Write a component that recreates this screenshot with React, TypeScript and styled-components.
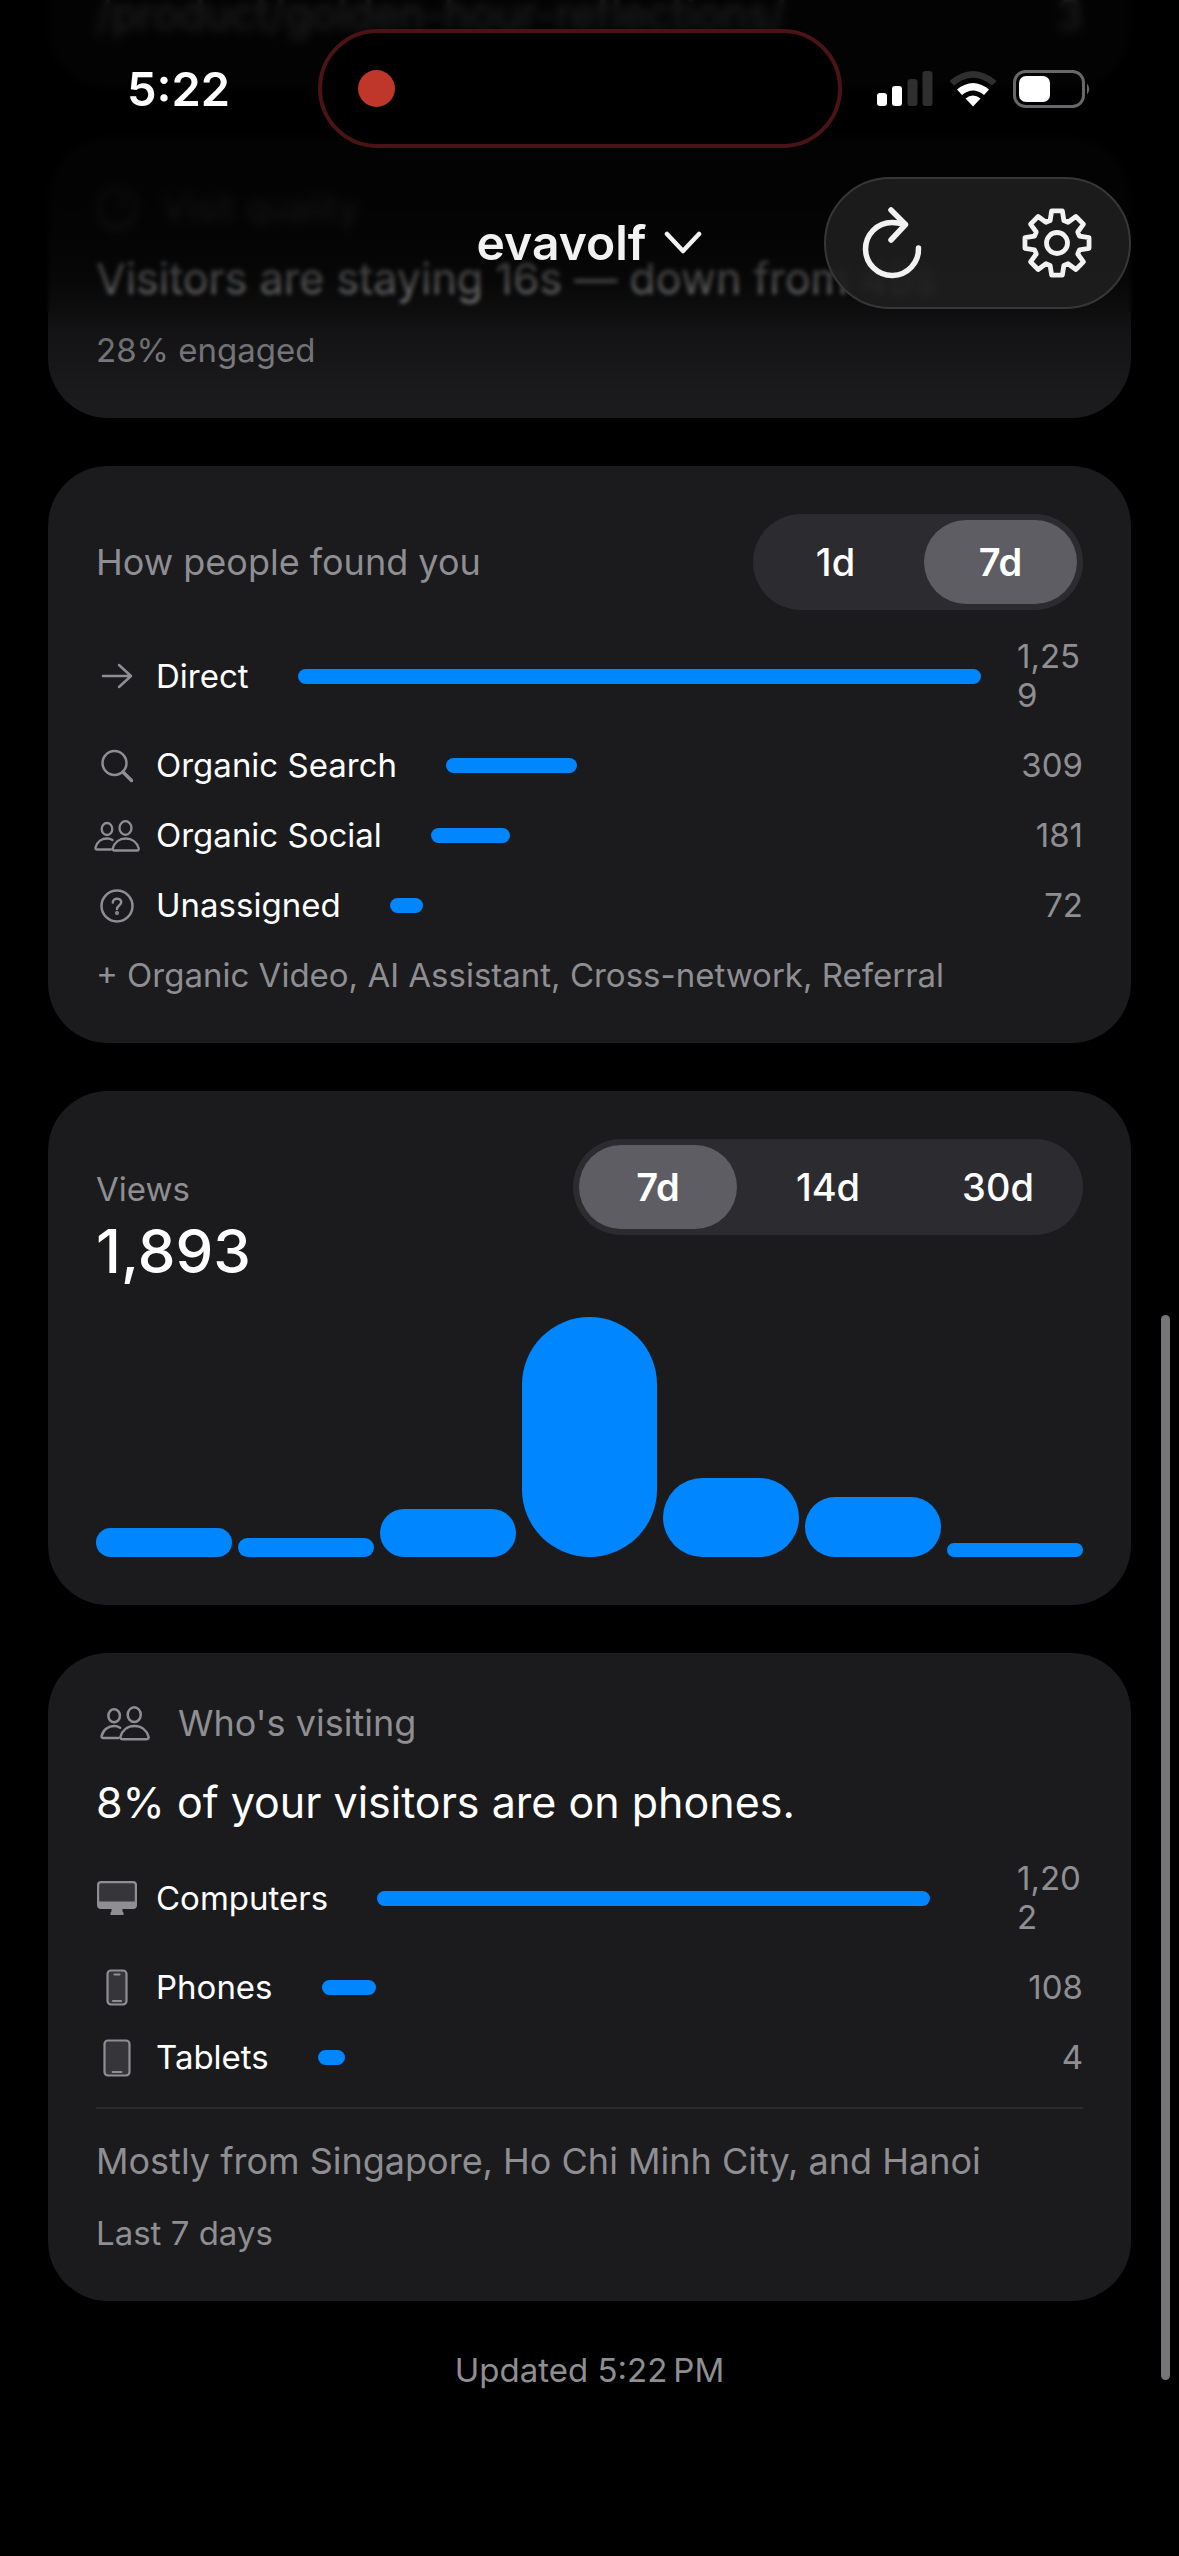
import React, { useState } from "react";
import styled, { createGlobalStyle } from "styled-components";

const GlobalStyle = createGlobalStyle`
  *, *::before, *::after { box-sizing: border-box; }
  html, body { margin: 0; background: #000; }
  body {
    font-family: Inter, "Liberation Sans", sans-serif;
    color: #fff;
    -webkit-font-smoothing: antialiased;
  }
  h1, h2, p, ul { margin: 0; padding: 0; font-weight: 400; }
  button { font: inherit; color: inherit; background: none; border: 0; padding: 0; }
`;

const Page = styled.div`
  position: relative;
  min-height: 100vh;
  overflow: hidden;
  background: #000;
`;

const Feed = styled.main`
  display: flex;
  flex-direction: column;
  gap: 48px;
  padding: 0 48px 96px;
`;

const Card = styled.section`
  display: flex;
  flex-direction: column;
  gap: ${(p: { $gap?: number }) => p.$gap ?? 30}px;
  padding: 48px;
  border-radius: 60px;
  background: #1b1b1d;
`;

const ClippedCard = styled(Card)`
  flex-direction: row;
  justify-content: space-between;
  height: 89px;
  padding: 0 48px 48px;
  align-items: flex-end;
  border-radius: 0 0 60px 60px;
  font-size: 43px;
  line-height: 53px;
`;

const CardLabel = styled.div`
  display: flex;
  align-items: center;
  gap: 24px;
  font-size: 36px;
  line-height: 45px;
  color: #8e8e93;
`;

const LabelIcon = styled.span`
  display: flex;
  justify-content: center;
  min-width: ${(p: { $width: number }) => p.$width}px;
`;

const Title = styled.h2`
  font-size: 36px;
  line-height: 45px;
  color: #8e8e93;
`;

const Headline = styled.p`
  font-size: 43px;
  line-height: 53px;
`;

const Summary = styled.div`
  display: flex;
  flex-direction: column;
  gap: 26px;
`;

const Breakdown = styled.div`
  display: flex;
  flex-direction: column;
  gap: 31px;
`;

const Note = styled.p`
  font-size: 36px;
  line-height: 45px;
  color: #8e8e93;
`;

const Caption = styled.p`
  font-size: 33px;
  line-height: 39px;
  color: #8e8e93;
`;

const Divider = styled.hr`
  width: 100%;
  height: 2px;
  margin: 0;
  border: 0;
  background: #2c2c2e;
`;

const CardHead = styled.header`
  display: flex;
  justify-content: space-between;
  align-items: ${(p: { $align: string }) => p.$align};
`;

const Total = styled.div`
  display: flex;
  flex-direction: column;
  gap: 6px;
`;

const TotalValue = styled.strong`
  font-size: 60px;
  line-height: 72px;
  font-weight: 500;
`;

const Segments = styled.div`
  display: grid;
  grid-auto-flow: column;
  grid-auto-columns: 1fr;
  gap: 12px;
  width: ${(p: { $width: number }) => p.$width}px;
  padding: 6px;
  border-radius: 48px;
  background: #2c2b30;
`;

const Segment = styled.button`
  height: 84px;
  border-radius: 42px;
  font-size: 38px;
  font-weight: ${(p: { $on: boolean }) => (p.$on ? 600 : 500)};
  background: ${(p: { $on: boolean }) => (p.$on ? "#5e5d63" : "transparent")};
`;

const Rows = styled.ul`
  display: flex;
  flex-direction: column;
  gap: 31px;
  list-style: none;
`;

const Row = styled.li`
  display: flex;
  align-items: center;
  font-size: 33px;
  line-height: 39px;
`;

const RowIcon = styled.span`
  display: flex;
  flex: none;
  justify-content: center;
  width: 42px;
  margin-right: 18px;
  color: #8e8e93;
  svg { flex: none; }
`;

const RowName = styled.span`
  flex: none;
  margin-right: 49px;
`;

const Track = styled.span`
  flex: 1;
  display: flex;
`;

const Fill = styled.span`
  height: 15px;
  min-width: 27px;
  border-radius: 8px;
  background: #0086ff;
`;

const RowValue = styled.span`
  flex: none;
  width: 66px;
  margin-left: 36px;
  color: #8e8e93;
  text-align: right;
  &[data-wrap="true"] { text-align: left; word-break: break-all; }
`;

const Chart = styled.div`
  display: flex;
  align-items: flex-end;
  gap: 6px;
  height: 240px;
`;

const Column = styled.span`
  flex: 1;
  border-radius: 68px;
  background: #0086ff;
`;

const Updated = styled.p`
  padding-top: 2px;
  text-align: center;
  font-size: 33px;
  line-height: 39px;
  color: #8e8e93;
`;

const Haze = styled.div`
  position: absolute;
  inset: 0 0 auto 0;
  height: 400px;
  background: linear-gradient(
    rgba(0, 0, 0, 0.87) 0, rgba(0, 0, 0, 0.87) 200px, rgba(0, 0, 0, 0.8) 250px,
    rgba(0, 0, 0, 0.72) 280px, rgba(0, 0, 0, 0.56) 300px, rgba(0, 0, 0, 0.25) 335px,
    rgba(0, 0, 0, 0) 400px
  );
`;

const Blur = styled.div`
  position: absolute;
  inset: 0 0 auto 0;
  height: ${(p: { $height: number }) => p.$height}px;
  backdrop-filter: blur(${(p: { $radius: number }) => p.$radius}px);
`;

const TopBar = styled.header`
  position: absolute;
  inset: 0 0 auto 0;
`;

const StatusBar = styled.div`
  display: grid;
  grid-template-columns: 318fr 524px 337fr;
  align-items: center;
  padding-top: 29px;
`;

const Clock = styled.time`
  padding-left: 127px;
  font-size: 47px;
  line-height: 58px;
  font-weight: 600;
`;

const Island = styled.div`
  display: flex;
  align-items: center;
  height: 119px;
  padding-left: 36px;
  border: 4px solid #4a1315;
  border-radius: 60px;
  background: #000;
`;

const RecordDot = styled.span`
  width: 37px;
  height: 37px;
  border-radius: 50%;
  background: #bf372a;
`;

const StatusIcons = styled.div`
  display: flex;
  align-items: center;
  justify-content: flex-end;
  gap: 16px;
  padding-right: 87px;
`;

const NavBar = styled.nav`
  display: grid;
  grid-template-columns: 1fr auto 1fr;
  align-items: center;
  padding: 29px 48px 0;
`;

const SiteButton = styled.button`
  grid-column: 2;
  display: flex;
  align-items: center;
  gap: 18px;
  font-size: 48px;
  line-height: 60px;
  font-weight: 600;
  color: #f2f2f2;
`;

const Actions = styled.div`
  justify-self: end;
  display: flex;
  align-items: center;
  justify-content: space-between;
  width: 307px;
  height: 132px;
  padding: 0 36px;
  border: 2px solid #373739;
  border-radius: 66px;
  background: rgba(31, 31, 31, 0.86);
  backdrop-filter: blur(3px);
`;

const IconButton = styled.button`
  display: flex;
  color: #f2f2f2;
`;

const ScrollThumb = styled.div`
  position: absolute;
  top: 1315px;
  right: 9px;
  width: 9px;
  height: 1065px;
  border-radius: 5px;
  background: #757577;
`;

type IconProps = { size?: number };

const stroke = {
  fill: "none",
  stroke: "currentColor",
  strokeLinecap: "round" as const,
  strokeLinejoin: "round" as const,
};

const ArrowIcon = () => (
  <svg width="32" height="28" viewBox="0 0 32 28" {...stroke} strokeWidth="2.5">
    <path d="M2 14H30M18 3L30 14L18 25" />
  </svg>
);

const SearchIcon = () => (
  <svg width="34" height="34" viewBox="0 0 34 34" {...stroke} strokeWidth="2.5">
    <circle cx="14.500" cy="14" r="12" />
    <path d="M23 23L31.500 31.500" strokeWidth="3.500" />
  </svg>
);

const PeopleIcon = ({ size = 46 }: IconProps) => (
  <svg width={size} height={(size * 32) / 46} viewBox="0 0 46 32" {...stroke} strokeWidth="2.3">
    <ellipse cx="13" cy="9" rx="5.300" ry="6" />
    <ellipse cx="31.500" cy="8" rx="6" ry="6.800" />
    <path d="M17 29.500H3Q1.200 29.500 1.500 27.500C3 21.500 8 18.500 13 18.500C15 18.500 17 19 18.500 20" />
    <path d="M20.500 30.500H43Q45 30.500 44.700 28.300C43 22.300 38 18.500 31.700 18.500C25.400 18.500 20.500 22.300 18.800 28.300Q18.500 30.500 20.500 30.500Z" />
  </svg>
);

const QuestionIcon = () => (
  <svg width="34" height="34" viewBox="0 0 34 34" {...stroke} strokeWidth="2.5">
    <circle cx="17" cy="17" r="15.500" />
    <path d="M12.800 13.500C12.800 8.500 21.200 8.500 21.200 13.300C21.200 16.500 17 16.500 17 20" />
    <circle cx="17" cy="24" r="0.800" />
  </svg>
);

const ComputerIcon = () => (
  <svg width="40" height="34" viewBox="0 0 40 34">
    <rect x="1" y="1" width="38" height="27" rx="3" fill="#36353a" />
    <path
      fill="#8e8e93"
      fillRule="evenodd"
      d="M4 0H36Q40 0 40 4V24Q40 28 36 28H25.500V30Q25.500 31 26.500 31.500V34H13.500V31.500Q14.500 31 14.500 30V28H4Q0 28 0 24V4Q0 0 4 0ZM4 2.200Q2.200 2.200 2.200 4V20.500H37.800V4Q37.800 2.200 36 2.200Z"
    />
  </svg>
);

const PhoneIcon = () => (
  <svg width="22" height="38" viewBox="0 0 22 38" {...stroke} strokeWidth="2.2">
    <rect x="1.500" y="1.500" width="19" height="34" rx="3.500" fill="#36353a" />
    <path d="M8.500 5.500H13.500M7 32H15" />
  </svg>
);

const TabletIcon = () => (
  <svg width="28" height="38" viewBox="0 0 28 38" {...stroke} strokeWidth="2.2">
    <rect x="1.500" y="1.500" width="25" height="35" rx="3.500" fill="#36353a" />
    <path d="M9.500 33H18.500" strokeWidth="1.800" />
  </svg>
);

const GaugeIcon = () => (
  <svg width="42" height="42" viewBox="0 0 42 42" {...stroke} strokeWidth="3">
    <circle cx="21" cy="21" r="19" />
    <path d="M21 22L28 12" />
  </svg>
);

const ChevronIcon = () => (
  <svg width="38" height="24" viewBox="0 0 38 24" {...stroke} strokeWidth="4.500">
    <path d="M3 3L19 20L35 3" />
  </svg>
);

const RefreshIcon = () => (
  <svg width="60" height="72" viewBox="0 0 60 72" {...stroke} strokeWidth="5.500">
    <path d="M43 17.500Q36 15.500 30 15.500A26.500 26.500 0 1 0 56.500 41" />
    <path d="M29 3L43.500 17.500L29 33" />
  </svg>
);

const GEAR_TEETH = 8;
const gearPath = (() => {
  const at = (radius: number, degrees: number) => {
    const a = (degrees * Math.PI) / 180;
    return `${(36 + radius * Math.sin(a)).toFixed(2)} ${(36 - radius * Math.cos(a)).toFixed(2)}`;
  };
  const points: string[] = [];
  for (let i = 0; i < GEAR_TEETH; i += 1) {
    const mid = i * (360 / GEAR_TEETH);
    points.push(at(23.5, mid - 17), at(32.5, mid - 9.5), at(32.5, mid + 9.5), at(23.5, mid + 17));
  }
  return `M${points.join("L")}Z`;
})();

const GearIcon = () => (
  <svg width="72" height="72" viewBox="0 0 72 72" {...stroke} strokeWidth="4.800">
    <path d={gearPath} />
    <circle cx="36" cy="36" r="10.500" />
  </svg>
);

const SignalIcon = () => (
  <svg width="56" height="36" viewBox="0 0 56 36">
    <rect x="0" y="22" width="10" height="13" rx="3" fill="#fff" />
    <rect x="15" y="15" width="10" height="20" rx="3" fill="#fff" />
    <rect x="30.500" y="8" width="10" height="27" rx="3" fill="#2f2f30" />
    <rect x="45.500" y="0" width="10" height="35" rx="3" fill="#2f2f30" />
  </svg>
);

const WifiIcon = () => (
  <svg width="48" height="36" viewBox="0 0 48 36">
    <path d="M0.500 10Q24 -10 47.500 10L43 14.500Q24 -1 5 14.500Z" fill="#2f2f30" />
    <path d="M8 18.500Q24 5.500 40 18.500L35 24Q24 15 13 24Z" fill="#fff" />
    <path d="M16.500 27.500Q24 21.500 31.500 27.500L24 35.500Z" fill="#fff" />
  </svg>
);

const BatteryIcon = () => (
  <svg width="79" height="38" viewBox="0 0 79 38">
    <rect x="1.500" y="1.500" width="69" height="35" rx="11" fill="none" stroke="#68686a" strokeWidth="3" />
    <rect x="6" y="6" width="31" height="26" rx="7" fill="#fff" />
    <path d="M74 13.500Q78.500 19 74 24.500Z" fill="#68686a" />
  </svg>
);

type Item = { name: string; value: number; icon: React.ReactNode };

const sources: Item[] = [
  { name: "Direct", value: 1259, icon: <ArrowIcon /> },
  { name: "Organic Search", value: 309, icon: <SearchIcon /> },
  { name: "Organic Social", value: 181, icon: <PeopleIcon /> },
  { name: "Unassigned", value: 72, icon: <QuestionIcon /> },
];

const devices: Item[] = [
  { name: "Computers", value: 1202, icon: <ComputerIcon /> },
  { name: "Phones", value: 108, icon: <PhoneIcon /> },
  { name: "Tablets", value: 4, icon: <TabletIcon /> },
];

// Daily views as a share of the busiest day, in percent.
const dailyShares = [12, 8, 20, 100, 33, 25, 6];

function BarList({ items, whole }: { items: Item[]; whole: number }) {
  return (
    <Rows>
      {items.map((item) => (
        <Row key={item.name}>
          <RowIcon>{item.icon}</RowIcon>
          <RowName>{item.name}</RowName>
          <Track>
            <Fill style={{ width: `${(item.value / whole) * 100}%` }} />
          </Track>
          <RowValue data-wrap={item.value > 999}>{item.value.toLocaleString("en-US")}</RowValue>
        </Row>
      ))}
    </Rows>
  );
}

function RangePicker({ options, initial, width }: { options: string[]; initial: string; width: number }) {
  const [value, setValue] = useState(initial);
  return (
    <Segments $width={width}>
      {options.map((option) => (
        <Segment
          key={option}
          type="button"
          $on={option === value}
          aria-pressed={option === value}
          onClick={() => setValue(option)}
        >
          {option}
        </Segment>
      ))}
    </Segments>
  );
}

export default function App() {
  return (
    <Page>
      <GlobalStyle />
      <Feed>
        <ClippedCard>
          <span>/product/golden-hour-reflections/</span>
          <span>3</span>
        </ClippedCard>

        <Card $gap={22}>
          <CardLabel>
            <LabelIcon $width={42}><GaugeIcon /></LabelIcon>
            Visit quality
          </CardLabel>
          <Summary>
            <Headline>Visitors are staying 16s — down from 49s</Headline>
            <Caption>28% engaged</Caption>
          </Summary>
        </Card>

        <Card $gap={27}>
          <CardHead $align="center">
            <Title>How people found you</Title>
            <RangePicker options={["1d", "7d"]} initial="7d" width={330} />
          </CardHead>
          <Breakdown>
            <BarList items={sources} whole={1259} />
            <Caption>+ Organic Video, AI Assistant, Cross-network, Referral</Caption>
          </Breakdown>
        </Card>

        <Card>
          <CardHead $align="baseline">
            <Total>
              <Caption>Views</Caption>
              <TotalValue>1,893</TotalValue>
            </Total>
            <RangePicker options={["7d", "14d", "30d"]} initial="7d" width={510} />
          </CardHead>
          <Chart>
            {dailyShares.map((share, day) => (
              <Column key={day} style={{ height: `${share}%` }} />
            ))}
          </Chart>
        </Card>

        <Card>
          <CardLabel>
            <LabelIcon $width={58}><PeopleIcon size={50} /></LabelIcon>
            Who's visiting
          </CardLabel>
          <Headline>8% of your visitors are on phones.</Headline>
          <BarList items={devices} whole={1314} />
          <Divider />
          <Note>Mostly from Singapore, Ho Chi Minh City, and Hanoi</Note>
          <Caption>Last 7 days</Caption>
        </Card>

        <Updated>Updated 5:22{"\u202f"}PM</Updated>
      </Feed>

      <Blur $height={312} $radius={2} />
      <Blur $height={240} $radius={4} />
      <Haze />
      <TopBar>
        <StatusBar>
          <Clock>5:22</Clock>
          <Island><RecordDot /></Island>
          <StatusIcons>
            <SignalIcon />
            <WifiIcon />
            <BatteryIcon />
          </StatusIcons>
        </StatusBar>
        <NavBar>
          <SiteButton type="button">
            evavolf
            <ChevronIcon />
          </SiteButton>
          <Actions>
            <IconButton type="button" aria-label="Refresh"><RefreshIcon /></IconButton>
            <IconButton type="button" aria-label="Settings"><GearIcon /></IconButton>
          </Actions>
        </NavBar>
      </TopBar>
      <ScrollThumb />
    </Page>
  );
}
